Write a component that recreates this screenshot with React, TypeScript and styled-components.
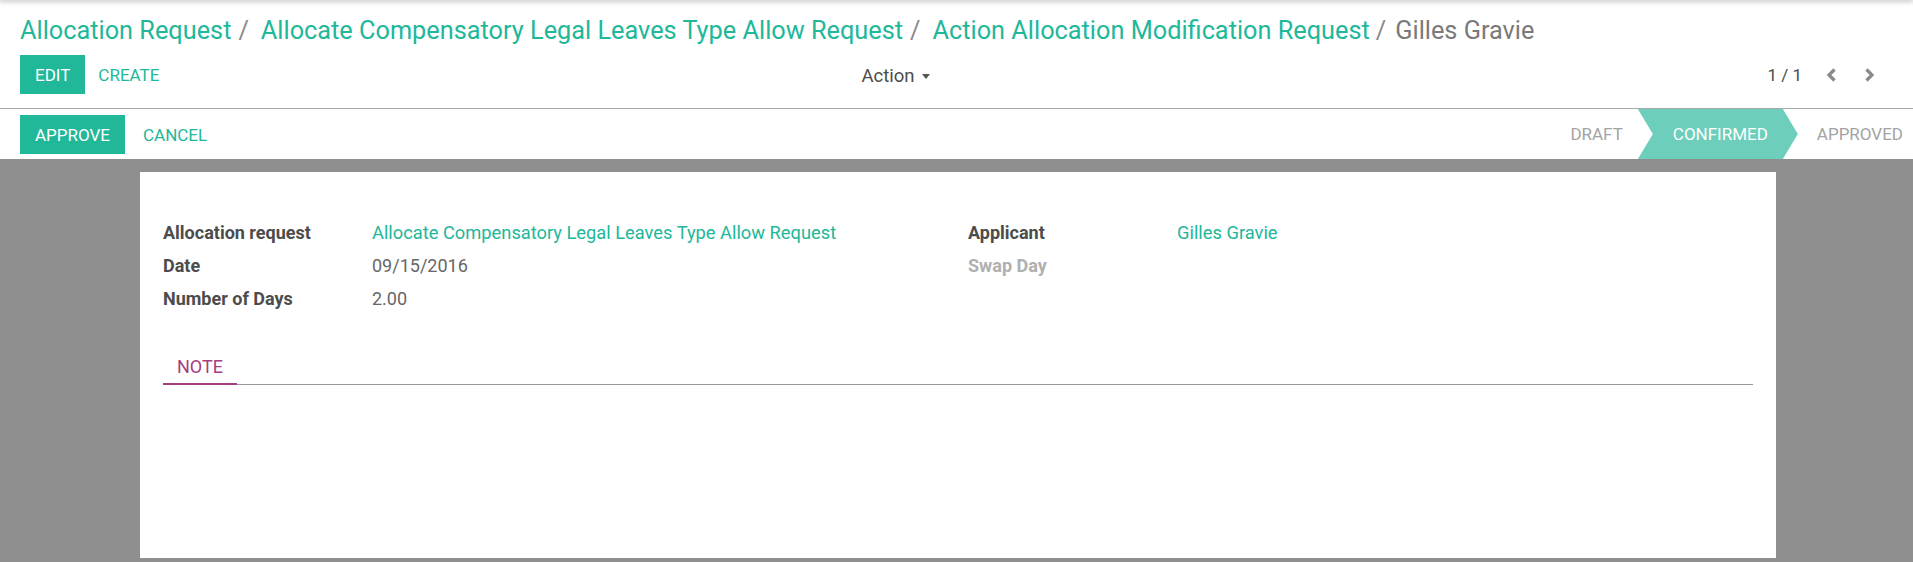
import React from "react";
import styled, { createGlobalStyle } from "styled-components";

const GlobalStyle = createGlobalStyle`
  html, body {
    margin: 0;
    padding: 0;
    background: #8f8f8f;
    font-family: Roboto, "Liberation Sans", sans-serif;
    overflow: hidden;
  }
  * { box-sizing: border-box; }
`;

const teal = "#21b799";

interface Field {
  label: string;
  value?: string;
  link?: boolean;
  muted?: boolean;
}

const leftFields: Field[] = [
  { label: "Allocation request", value: "Allocate Compensatory Legal Leaves Type Allow Request", link: true },
  { label: "Date", value: "09/15/2016" },
  { label: "Number of Days", value: "2.00" },
];

const rightFields: Field[] = [
  { label: "Applicant", value: "Gilles Gravie", link: true },
  { label: "Swap Day", muted: true },
];

const crumbs = [
  "Allocation Request",
  "Allocate Compensatory Legal Leaves Type Allow Request",
  "Action Allocation Modification Request",
];

const Chevron = ({ dir }: { dir: "left" | "right" }) => (
  <svg width="11" height="14" viewBox="0 0 11 14">
    <polyline
      points={dir === "left" ? "8.5,1.5 3,7 8.5,12.5" : "2.5,1.5 8,7 2.5,12.5"}
      fill="none"
      stroke="#8a8a8a"
      strokeWidth="3.2"
    />
  </svg>
);

const FieldGroup = ({ fields }: { fields: Field[] }) => (
  <Group>
    {fields.map((f) => (
      <React.Fragment key={f.label}>
        <Label muted={f.muted}>{f.label}</Label>
        <Value link={f.link}>{f.value}</Value>
      </React.Fragment>
    ))}
  </Group>
);

const App = () => {
  return (
    <Page>
      <GlobalStyle />
      <TopShadow />
      <ControlPanel>
        <Breadcrumb>
          {crumbs.map((c, i) => (
            <Crumb key={c}>
              <CrumbLink>{c}</CrumbLink>
              <Sep last={i === crumbs.length - 1}>/</Sep>
            </Crumb>
          ))}
          <Current>Gilles Gravie</Current>
        </Breadcrumb>
        <PanelRow>
          <PanelLeft>
            <Buttons gap={2}>
              <PrimaryButton>EDIT</PrimaryButton>
              <LinkButton>CREATE</LinkButton>
            </Buttons>
            <Dropdown>
              Action <Caret />
            </Dropdown>
          </PanelLeft>
          <Pager>
            <PagerValue>1 / 1</PagerValue>
            <PagerButton>
              <Chevron dir="left" />
            </PagerButton>
            <PagerButton>
              <Chevron dir="right" />
            </PagerButton>
          </Pager>
        </PanelRow>
      </ControlPanel>
      <StatusBar>
        <Buttons gap={7}>
          <PrimaryButton>APPROVE</PrimaryButton>
          <LinkButton>CANCEL</LinkButton>
        </Buttons>
        <Stages>
          <Stage>DRAFT</Stage>
          <ActiveStage>CONFIRMED</ActiveStage>
          <Stage last>APPROVED</Stage>
        </Stages>
      </StatusBar>
      <Sheet>
        <FieldGrid>
          <FieldGroup fields={leftFields} />
          <FieldGroup fields={rightFields} />
        </FieldGrid>
        <Tabs>
          <Tab active>NOTE</Tab>
        </Tabs>
      </Sheet>
    </Page>
  );
};

export default App;

const Page = styled.div`
  min-height: 562px;
  background: #8f8f8f;
`;

const TopShadow = styled.div`
  height: 0;
  position: relative;
  z-index: 2;
  box-shadow: 0 0 5px 1px rgba(0, 0, 0, 0.45);
`;

const ControlPanel = styled.div`
  background: #ffffff;
  padding: 16px 0 0;
  border-bottom: 1px solid #a9a9a9;
`;

const Breadcrumb = styled.div`
  display: flex;
  padding: 0 20px;
  font-size: 25.3px;
  line-height: 29px;
  white-space: nowrap;
`;

const Crumb = styled.span`
  display: flex;
`;

const CrumbLink = styled.span`
  color: ${teal};
`;

const Sep = styled.span<{ last?: boolean }>`
  color: #8a8a8a;
  padding: ${(p) => (p.last ? "0 9px 0 6px" : "0 12px 0 7px")};
`;

const Current = styled.span`
  color: #7a7a7a;
`;

const PanelRow = styled.div`
  display: flex;
  align-items: center;
  margin-top: 10px;
  padding-bottom: 14px;
`;

const PanelLeft = styled.div`
  width: 50%;
  display: flex;
  align-items: center;
  justify-content: space-between;
  padding: 0 27px 0 20px;
`;

const Buttons = styled.div<{ gap: number }>`
  display: flex;
  align-items: center;
  gap: ${(p) => p.gap}px;
`;

const PrimaryButton = styled.button`
  height: 39px;
  padding: 0 15px;
  border: none;
  border-radius: 0;
  background: ${teal};
  color: #ffffff;
  font-family: Roboto, "Liberation Sans", sans-serif;
  font-size: 17px;
  cursor: pointer;
`;

const LinkButton = styled.button`
  height: 39px;
  padding: 0 15px 0 11px;
  border: none;
  background: transparent;
  color: ${teal};
  font-family: Roboto, "Liberation Sans", sans-serif;
  font-size: 17px;
  cursor: pointer;
`;

const Dropdown = styled.div`
  display: flex;
  align-items: center;
  gap: 7px;
  color: #4c4c4c;
  font-size: 18.5px;
  padding-top: 2px;
`;

const Caret = styled.span`
  width: 0;
  height: 0;
  border-top: 5px solid #555555;
  border-left: 4.5px solid transparent;
  border-right: 4.5px solid transparent;
  margin-top: 2px;
`;

const Pager = styled.div`
  width: 50%;
  display: flex;
  align-items: center;
  justify-content: flex-end;
  padding-right: 25px;
`;

const PagerValue = styled.span`
  color: #4c4c4c;
  font-size: 17px;
  margin-right: 10px;
`;

const PagerButton = styled.span`
  width: 38px;
  height: 39px;
  display: flex;
  align-items: center;
  justify-content: center;
`;

const StatusBar = styled.div`
  display: flex;
  align-items: center;
  justify-content: space-between;
  height: 50px;
  background: #ffffff;
  padding: 1px 0 0 20px;
`;

const Stages = styled.div`
  display: flex;
  align-self: stretch;
  align-items: stretch;
  margin-top: -1px;
`;

const Stage = styled.div<{ last?: boolean }>`
  display: flex;
  align-items: center;
  color: #a3a3a3;
  font-size: 17px;
  padding: ${(p) => (p.last ? "0 10px 0 19px" : "0 15px 0 0")};
`;

const ActiveStage = styled.div`
  display: flex;
  align-items: center;
  width: 160px;
  padding: 0 30px 0 35px;
  background: #6dcfbb;
  color: #ffffff;
  font-size: 17px;
  clip-path: polygon(0 0, 145px 0, 160px 50%, 145px 100%, 0 100%, 15px 50%);
`;

const Sheet = styled.div`
  width: 1636px;
  height: 386px;
  margin: 13px 0 0 140px;
  background: #ffffff;
  padding: 44px 23px 0;
`;

const FieldGrid = styled.div`
  display: grid;
  grid-template-columns: 805px 1fr;
`;

const Group = styled.div`
  display: grid;
  grid-template-columns: 209px 1fr;
  grid-auto-rows: 33px;
  align-content: start;
  font-size: 18px;
  line-height: 33px;
`;

const Label = styled.div<{ muted?: boolean }>`
  font-weight: 700;
  color: ${(p) => (p.muted ? "#b0b0b0" : "#4c4c4c")};
  white-space: nowrap;
`;

const Value = styled.div<{ link?: boolean }>`
  color: ${(p) => (p.link ? teal : "#666666")};
  font-size: ${(p) => (p.link ? "18.3px" : "18px")};
  white-space: nowrap;
`;

const Tabs = styled.div`
  display: flex;
  margin-top: 41px;
  border-bottom: 1px solid #999999;
`;

const Tab = styled.div<{ active?: boolean }>`
  padding: 0 14px 5px;
  font-size: 18px;
  line-height: 22px;
  color: ${(p) => (p.active ? "#a3407f" : "#666666")};
  border-bottom: 2px solid ${(p) => (p.active ? "#a3407f" : "transparent")};
  margin-bottom: -1px;
`;
